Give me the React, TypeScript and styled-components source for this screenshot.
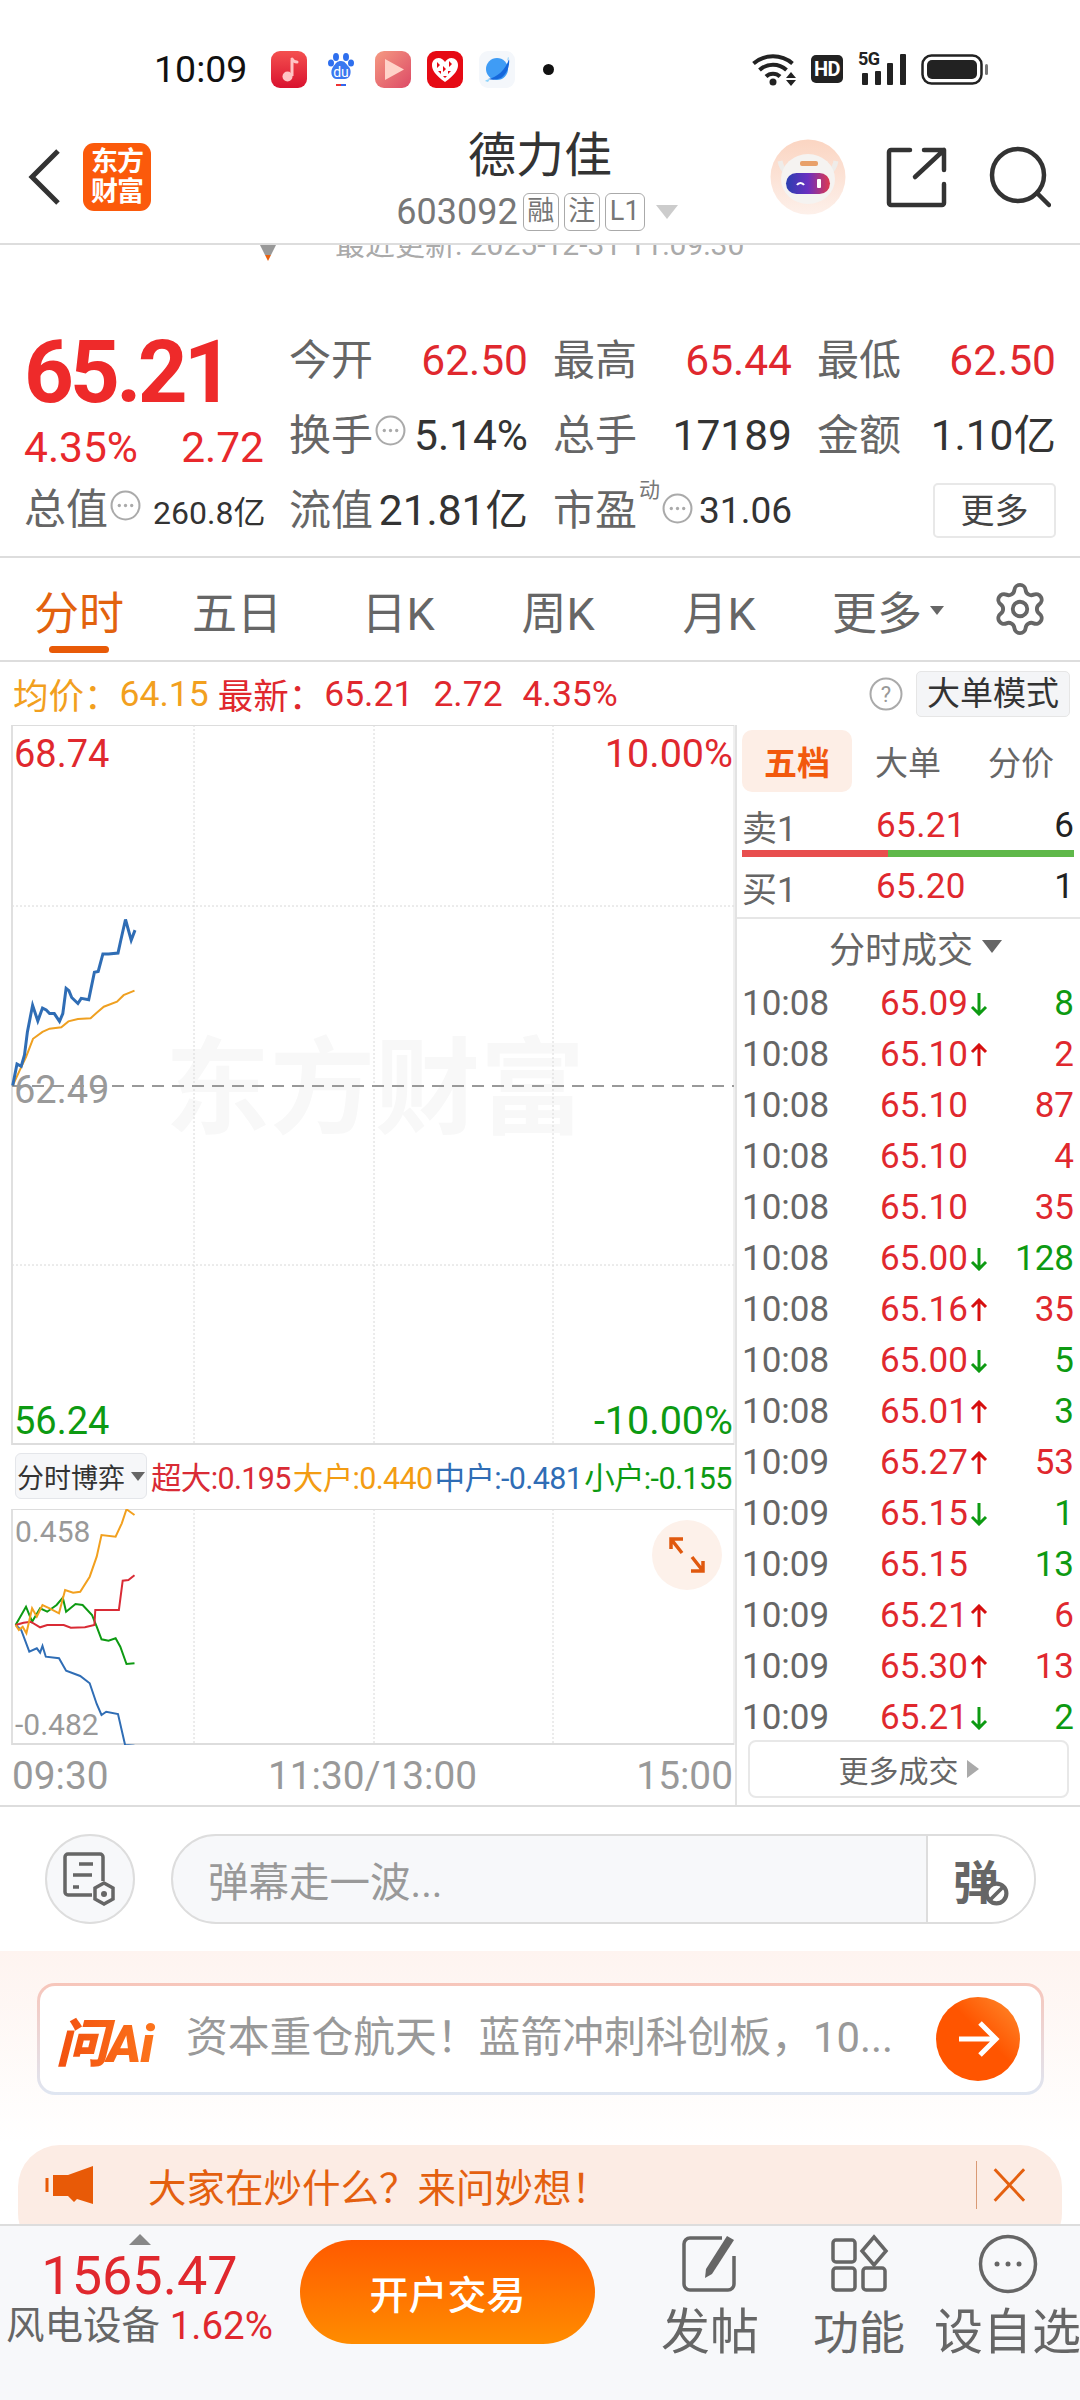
import styled, { createGlobalStyle } from "styled-components";
import { Settings } from "lucide-react";

const Global = createGlobalStyle`
  html, body {
    margin: 0;
    padding: 0;
    background: #fff;
  }
  * {
    box-sizing: border-box;
  }
  body {
    font-family: Roboto, "Noto Sans CJK SC", sans-serif;
    color: #666;
  }
`;

const RED = "#e0282e";
const GREEN = "#0d9a12";

const Page = styled.div`
  width: 1080px;
  height: 2400px;
  overflow: hidden;
  display: flex;
  flex-direction: column;
  background: #fff;
`;

/* status bar */
const StatusBar = styled.div`
  height: 110px;
  padding: 46px 92px 0 154px;
  display: flex;
  align-items: flex-start;
`;

const Clock = styled.div`
  font-size: 37.5px;
  line-height: 46px;
  color: #111;
  width: 117px;
`;

const AppIcons = styled.div`
  display: flex;
  align-items: center;
  gap: 16px;
  height: 46px;
`;

const AppIcon = styled.svg`
  width: 36px;
  height: 37px;
  display: block;
`;

const Dot = styled.span`
  width: 11px;
  height: 11px;
  margin-left: 12px;
  border-radius: 50%;
  background: #111;
`;

const SysIcons = styled.div`
  margin-left: auto;
  display: flex;
  align-items: center;
  gap: 15px;
  height: 46px;
`;

const HdBadge = styled.span`
  width: 32px;
  height: 28px;
  border-radius: 5px;
  background: #222;
  color: #fff;
  font-size: 20px;
  font-weight: 700;
  line-height: 28px;
  text-align: center;
  letter-spacing: -0.5px;
`;

const SignalWrap = styled.div`
  position: relative;
  width: 48px;
  height: 32px;
`;

const FiveG = styled.span`
  position: absolute;
  left: 0;
  top: -3px;
  font-size: 18px;
  line-height: 18px;
  font-weight: 700;
  color: #222;
  letter-spacing: -0.5px;
`;

/* header */
const Header = styled.header`
  height: 135px;
  display: flex;
  align-items: center;
  border-bottom: 2px solid #ddd;
  position: relative;
  padding: 0 29px 0 27px;
`;

const LogoTile = styled.div`
  margin-left: 22px;
  width: 68px;
  height: 68px;
  border-radius: 11px;
  background: #fb5a0b;
  color: #fff;
  font-size: 27px;
  font-weight: 700;
  line-height: 30px;
  text-align: center;
  padding-top: 4px;
  letter-spacing: -1px;
`;

const TitleBlock = styled.div`
  position: absolute;
  left: 0;
  right: 0;
  top: 0;
  display: flex;
  flex-direction: column;
  align-items: center;
  pointer-events: none;
`;

const StockName = styled.div`
  font-size: 48px;
  line-height: 68px;
  margin-top: 12px;
  color: #333;
`;

const CodeRow = styled.div`
  display: flex;
  align-items: center;
  gap: 5px;
  margin-top: 2px;
  margin-left: -6px;
  height: 40px;
`;

const CodeText = styled.span`
  font-size: 36px;
  color: #777;
  margin-right: 0;
`;

const MiniBadge = styled.span<{ $w?: number }>`
  width: ${(p) => p.$w ?? 36}px;
  height: 38px;
  border: 1.5px solid #aaa;
  border-radius: 6px;
  font-size: 27px;
  line-height: 34px;
  text-align: center;
  color: #777;
`;

const DownTri = styled.span<{ $size?: number; $color?: string; $ml?: number }>`
  width: 0;
  height: 0;
  margin-left: ${(p) => p.$ml ?? 0}px;
  border-left: ${(p) => p.$size ?? 11}px solid transparent;
  border-right: ${(p) => p.$size ?? 11}px solid transparent;
  border-top: ${(p) => (p.$size ?? 11) * 1.3}px solid ${(p) => p.$color ?? "#ccc"};
`;

const HeaderRight = styled.div`
  margin-left: auto;
  display: flex;
  align-items: center;
`;

const Robot = styled.svg`
  width: 76px;
  height: 76px;
  margin-right: 40px;
`;

const HeadIcon = styled.svg<{ $gap?: number }>`
  width: 62px;
  height: 62px;
  margin-right: ${(p) => p.$gap ?? 0}px;
  display: block;
`;

/* clipped update line */
const UpdateStrip = styled.div`
  height: 18px;
  overflow: hidden;
  display: flex;
  align-items: flex-end;
  padding-left: 260px;
`;

const UpdateTri = styled.span`
  width: 16px;
  height: 16px;
  clip-path: polygon(0 0, 100% 0, 50% 100%);
  background: linear-gradient(#999 65%, #e8600f 65%);
  margin-bottom: 2px;
  margin-right: 59px;
`;

const UpdateText = styled.span`
  font-size: 30px;
  line-height: 36px;
  color: #aaa;
  white-space: nowrap;
`;

/* quote */
const Quote = styled.section`
  height: 295px;
  padding: 60px 24px 0 0;
  display: flex;
  border-bottom: 2px solid #ddd;
`;

const QuoteLeft = styled.div`
  width: 288px;
  flex: none;
  padding: 7px 0 0 24px;
`;

const BigPrice = styled.div`
  font-size: 87px;
  line-height: 84px;
  font-weight: 700;
  color: #ee2a2a;
  letter-spacing: -3.8px;
`;

const ChangeRow = styled.div`
  height: 66px;
  width: 240px;
  display: flex;
  align-items: center;
  justify-content: space-between;
  font-size: 42.5px;
  color: #e8282c;
`;

const TotalRow = styled.div`
  height: 60px;
  display: flex;
  align-items: center;
`;

const Label = styled.span`
  font-size: 42px;
  line-height: 50px;
  color: #666;
  white-space: nowrap;
`;

const Hint = styled.svg<{ $mt: number }>`
  width: 31px;
  height: 31px;
  margin-left: 2px;
  flex: none;
  align-self: flex-start;
  margin-top: ${(p) => p.$mt}px;
`;

const SmallValue = styled.span`
  font-size: 32px;
  color: #333;
  margin-left: 12px;
  white-space: nowrap;
`;

const QuoteGrid = styled.div`
  flex: 1;
  display: grid;
  grid-template-columns: repeat(3, 239px);
  grid-auto-rows: 75px;
  column-gap: 25px;
  justify-content: end;
`;

const Cell = styled.div`
  display: flex;
  align-items: center;
  justify-content: space-between;
  position: relative;
`;

const HintGroup = styled.div`
  display: flex;
  align-items: center;
`;

const Value = styled.span<{ $red?: boolean; $size?: number }>`
  font-size: ${(p) => p.$size ?? 42.5}px;
  line-height: 50px;
  height: 50px;
  color: ${(p) => (p.$red ? RED : "#333")};
  white-space: nowrap;
`;

const Superscript = styled.sup`
  font-size: 21px;
  line-height: 1;
  color: #777;
  align-self: flex-start;
  margin-top: -6px;
  margin-left: 2px;
`;

const MoreBtn = styled.button`
  margin-left: auto;
  width: 123px;
  height: 55px;
  background: #fff;
  border: 2px solid #e8e8e8;
  border-radius: 5px;
  font: inherit;
  font-size: 34px;
  line-height: 1;
  color: #444;
  padding: 0;
`;

/* tabs */
const Tabs = styled.nav`
  height: 104px;
  display: grid;
  grid-template-columns: 158px 158px 164px 156px 166px 172px 1fr;
  border-bottom: 2px solid #ddd;
`;

const Tab = styled.div<{ $active?: boolean }>`
  position: relative;
  display: flex;
  align-items: center;
  justify-content: center;
  font-size: 45px;
  padding-top: 3px;
  color: ${(p) => (p.$active ? "#e2620e" : "#666")};
  gap: 8px;
  &::after {
    content: "";
    display: ${(p) => (p.$active ? "block" : "none")};
    position: absolute;
    bottom: 7px;
    left: 50%;
    width: 60px;
    height: 7px;
    margin-left: -30px;
    border-radius: 4px;
    background: #e85a07;
  }
`;

const GearCell = styled.div`
  display: flex;
  align-items: center;
  justify-content: flex-start;
  color: #666;
  padding-left: 17px;
`;

/* info bar */
const InfoBar = styled.div`
  height: 63px;
  display: flex;
  align-items: center;
  padding: 0 10px 0 13px;
  font-size: 35.5px;
  white-space: pre;
`;

const InfoText = styled.span<{ $color: string; $gap?: number }>`
  color: ${(p) => p.$color};
  margin-right: ${(p) => p.$gap ?? 0}px;
`;

const HelpIcon = styled.svg`
  width: 34px;
  height: 34px;
  margin-left: auto;
  margin-right: 13px;
`;

const ModeBtn = styled.div`
  width: 154px;
  height: 46px;
  background: #f4f5f7;
  border: 1px solid #e6e6e6;
  border-radius: 5px;
  font-size: 33px;
  line-height: 44px;
  text-align: center;
  color: #333;
`;

/* main chart + side panel */
const Main = styled.div`
  height: 1082px;
  display: flex;
  border-bottom: 2px solid #ddd;
`;

const ChartCol = styled.div`
  width: 735px;
  flex: none;
  display: flex;
  flex-direction: column;
`;

const PriceChart = styled.div`
  position: relative;
  height: 720px;
`;

const ChartSvg = styled.svg`
  display: block;
  position: absolute;
  left: 0;
  top: 0;
`;

const Watermark = styled.div`
  position: absolute;
  left: 165px;
  top: 305px;
  font-size: 105px;
  line-height: 120px;
  font-weight: 700;
  letter-spacing: 0;
  color: #f8f8f8;
  white-space: nowrap;
`;

const AxisLabel = styled.span<{ $color: string; $side: "left" | "right"; $top: number }>`
  position: absolute;
  ${(p) => p.$side}: ${(p) => (p.$side === "left" ? 14 : 2)}px;
  top: ${(p) => p.$top}px;
  font-size: ${(p) => (p.$side === "left" ? 38 : 39.5)}px;
  line-height: 44px;
  color: ${(p) => p.$color};
`;

const LegendRow = styled.div`
  height: 64px;
  display: flex;
  align-items: center;
  gap: 2px;
  padding: 0 0 2px 15px;
`;

const Picker = styled.div`
  width: 132px;
  height: 46px;
  flex: none;
  border: 1px solid #e4e6ea;
  border-radius: 6px;
  background: #f6f7f9;
  display: flex;
  align-items: center;
  justify-content: center;
  gap: 6px;
  font-size: 27px;
  color: #333;
  margin-right: 2px;
`;

const LegendText = styled.span<{ $color: string }>`
  font-size: 30.5px;
  letter-spacing: -0.65px;
  color: ${(p) => p.$color};
  white-space: nowrap;
`;

const FlowChart = styled.div`
  position: relative;
  height: 236px;
`;

const FlowLabel = styled.span<{ $top: number }>`
  position: absolute;
  left: 15px;
  top: ${(p) => p.$top}px;
  font-size: 30px;
  line-height: 36px;
  color: #999;
`;

const ExpandBtn = styled.div`
  position: absolute;
  right: 13px;
  top: 11px;
  width: 70px;
  height: 70px;
  border-radius: 50%;
  background: #fdf1ea;
  display: flex;
  align-items: center;
  justify-content: center;
`;

const TimeAxis = styled.div`
  flex: 1;
  display: flex;
  align-items: center;
  justify-content: space-between;
  padding: 0 2px 0 12px;
  font-size: 38.8px;
  color: #999;
`;

const SidePanel = styled.aside`
  flex: 1;
  border-left: 2px solid #e3e3e3;
  display: flex;
  flex-direction: column;
  padding-top: 5px;
`;

const SideTabs = styled.div`
  height: 62px;
  margin-left: 5px;
  display: grid;
  grid-template-columns: 110px 112px 114px;
`;

const SideTab = styled.div<{ $active?: boolean }>`
  display: flex;
  align-items: center;
  justify-content: center;
  font-size: 33px;
  border-radius: 10px;
  font-weight: ${(p) => (p.$active ? 700 : 400)};
  color: ${(p) => (p.$active ? "#f2590d" : "#666")};
  background: ${(p) => (p.$active ? "#fdeee6" : "transparent")};
`;

const BookRow = styled.div<{ $top?: number }>`
  height: 58px;
  display: flex;
  align-items: center;
  padding: ${(p) => p.$top ?? 0}px 6px 0 5px;
  font-size: 35px;
`;

const BookLabel = styled.span`
  width: 134px;
  color: #666;
`;

const BookPrice = styled.span`
  color: ${RED};
  letter-spacing: 0.4px;
`;

const BookQty = styled.span`
  margin-left: auto;
  color: #222;
`;

const BookBar = styled.div`
  height: 7px;
  margin: 0 6px 0 5px;
  display: flex;
  flex: none;
`;

const BookBarPart = styled.div<{ $color: string; $flex: number }>`
  flex: ${(p) => p.$flex};
  background: ${(p) => p.$color};
`;

const TradeHead = styled.div`
  height: 61px;
  margin-top: 2px;
  border-top: 2px solid #e6e6e6;
  display: flex;
  align-items: center;
  justify-content: center;
  gap: 9px;
  font-size: 36px;
  color: #666;
  padding: 0 0 4px 14px;
`;

const TradeList = styled.div`
  height: 768px;
  overflow: hidden;
`;

const TradeRow = styled.div`
  height: 51px;
  display: flex;
  align-items: center;
  padding: 0 6px 0 5px;
  font-size: 35px;
`;

const TradeTime = styled.span`
  width: 138px;
  flex: none;
  color: #666;
`;

const TradePrice = styled.span`
  width: 90px;
  flex: none;
  color: ${RED};
`;

const TradeArrow = styled.svg`
  width: 18px;
  height: 24px;
  flex: none;
`;

const TradeQty = styled.span<{ $up: boolean }>`
  margin-left: auto;
  color: ${(p) => (p.$up ? RED : GREEN)};
`;

const TradeMore = styled.div`
  margin: -6px 11px 0 11px;
  height: 58px;
  border: 2px solid #e8e8e8;
  border-radius: 8px;
  display: flex;
  align-items: center;
  justify-content: center;
  gap: 8px;
  font-size: 30px;
  color: #666;
  background: #fff;
  position: relative;
`;

const RightTri = styled.span`
  width: 0;
  height: 0;
  border-top: 9px solid transparent;
  border-bottom: 9px solid transparent;
  border-left: 12px solid #aaa;
`;

/* danmu */
const DanmuRow = styled.div`
  height: 144px;
  display: flex;
  align-items: center;
  padding: 0 44px 0 45px;
  gap: 36px;
`;

const DanmuRound = styled.div`
  width: 90px;
  height: 90px;
  border-radius: 50%;
  border: 2px solid #ddd;
  background: #f7f8fa;
  display: flex;
  align-items: center;
  justify-content: center;
  flex: none;
`;

const DanmuInput = styled.div`
  flex: 1;
  height: 90px;
  border: 2px solid #ddd;
  border-radius: 45px;
  background: #f7f8fa;
  display: flex;
  align-items: center;
  overflow: hidden;
`;

const DanmuHolder = styled.div`
  flex: 1;
  padding-left: 35px;
  font-size: 40.5px;
  color: #999;
`;

const DanmuSend = styled.div`
  width: 108px;
  height: 100%;
  background: #fff;
  border-left: 2px solid #ddd;
  display: flex;
  align-items: center;
  padding-left: 25px;
  position: relative;
  font-size: 46px;
  font-weight: 700;
  color: #666;
`;

const NoBadge = styled.svg`
  position: absolute;
  left: 56px;
  top: 45px;
  width: 25px;
  height: 25px;
`;

/* ai area */
const AiArea = styled.section`
  height: 273px;
  padding: 32px 18px 0;
  background: linear-gradient(#fef4f0, #fff 70%);
  overflow: hidden;
`;

const AiBox = styled.div`
  height: 112px;
  margin: 0 18px 0 19px;
  border-radius: 18px;
  padding: 3px;
  background: linear-gradient(#f7c6bb, #dfe6f2);
`;

const AiInner = styled.div`
  height: 100%;
  border-radius: 15px;
  background: #fff;
  display: flex;
  align-items: center;
  padding: 0 21px 0 16px;
`;

const AiLogo = styled.span`
  font-size: 52px;
  font-weight: 900;
  font-style: italic;
  letter-spacing: -1px;
  background: linear-gradient(90deg, #f2500f, #ff7f20);
  -webkit-background-clip: text;
  background-clip: text;
  color: transparent;
  width: 130px;
  flex: none;
`;

const AiQuestion = styled.span`
  flex: 1;
  font-size: 41.8px;
  line-height: 50px;
  color: #999;
  white-space: nowrap;
  padding-bottom: 3px;
`;

const AiGo = styled.div`
  width: 84px;
  height: 84px;
  border-radius: 50%;
  background: linear-gradient(45deg, #ff5500 55%, #ff8d2f);
  display: flex;
  align-items: center;
  justify-content: center;
  flex: none;
`;

const Banner = styled.div`
  height: 110px;
  margin-top: 50px;
  padding: 0 32px 30px 27px;
  border-radius: 42px;
  background: #fcece4;
  display: flex;
  align-items: center;
`;

const BannerText = styled.span`
  font-size: 38.5px;
  color: #e4600f;
  margin-left: 53px;
  flex: 1;
`;

const BannerClose = styled.svg`
  width: 54px;
  height: 48px;
  border-left: 1px solid #d99a75;
`;

/* bottom bar */
const BottomBar = styled.footer`
  flex: 1;
  background: #f7f8fa;
  border-top: 2px solid #ddd;
  display: flex;
  align-items: flex-start;
`;

const IndexBlock = styled.div`
  width: 279px;
  margin-right: 21px;
  flex: none;
  display: flex;
  flex-direction: column;
  align-items: center;
  padding-top: 8px;
`;

const UpTri = styled.span`
  width: 0;
  height: 0;
  border-left: 11px solid transparent;
  border-right: 11px solid transparent;
  border-bottom: 11px solid #888;
`;

const IndexPrice = styled.div`
  font-size: 54px;
  line-height: 62px;
  color: #e0282e;
`;

const IndexName = styled.div`
  font-size: 38.5px;
  line-height: 46px;
  color: #666;
  margin-top: -4px;
  white-space: nowrap;
`;

const IndexPct = styled.span`
  color: #e0282e;
`;

const TradeBtn = styled.div`
  width: 295px;
  height: 104px;
  margin-top: 14px;
  border-radius: 52px;
  background: linear-gradient(#ff5a00, #ff8c00);
  color: #fff;
  font-size: 39px;
  font-weight: 500;
  display: flex;
  align-items: center;
  justify-content: center;
  flex: none;
`;

const Actions = styled.div`
  flex: 1;
  display: grid;
  grid-template-columns: 148px 150px 1fr;
  padding: 8px 0 0 41px;
`;

const Action = styled.div<{ $size: number }>`
  display: flex;
  flex-direction: column;
  align-items: center;
  font-size: ${(p) => p.$size}px;
  line-height: 58px;
  color: #666;
  white-space: nowrap;
`;

const ActionIcon = styled.svg`
  width: 60px;
  height: 60px;
  margin-bottom: 10px;
`;

type Pt = [number, number];

const pts = (list: Pt[], fy: number, oy: number) =>
  list.map(([x, y]) => `${(x / 2.119).toFixed(1)},${(y / fy + oy).toFixed(1)}`).join(" ");

const priceLine: Pt[] = [[27,797],[36,750],[45,755],[52,730],[58,680],[69,622],[80,656],[90,628],[98,632],[105,640],[115,640],[126,657],[133,640],[140,585],[146,590],[152,605],[165,618],[172,607],[188,610],[200,550],[208,548],[218,510],[230,510],[250,508],[256,480],[266,435],[278,480],[286,458]];
const avgLine: Pt[] = [[27,797],[45,757],[55,735],[70,695],[90,680],[105,673],[130,670],[145,657],[165,652],[192,650],[205,638],[220,625],[248,614],[262,600],[285,590]];

const flowOrange: Pt[] = [[33,585],[40,600],[48,590],[56,610],[68,535],[78,560],[90,525],[105,535],[125,550],[138,480],[155,488],[170,485],[190,440],[205,380],[215,315],[245,320],[258,280],[268,238],[285,255]];
const flowRed: Pt[] = [[33,585],[50,578],[65,575],[85,592],[100,585],[135,585],[150,593],[180,592],[200,585],[202,540],[252,540],[260,452],[272,450],[285,436]];
const flowGreen: Pt[] = [[33,585],[55,530],[68,575],[85,535],[100,545],[120,525],[133,503],[140,545],[160,522],[175,525],[195,555],[205,590],[215,628],[230,632],[245,625],[255,650],[268,702],[285,700]];
const flowBlue: Pt[] = [[33,585],[45,600],[62,665],[78,655],[85,668],[90,648],[97,680],[125,685],[140,722],[170,738],[190,760],[205,822],[215,855],[225,845],[250,852],[265,945],[285,947]];

const trades: [string, string, "up" | "down" | "", string, boolean][] = [
  ["10:08", "65.09", "down", "8", false],
  ["10:08", "65.10", "up", "2", true],
  ["10:08", "65.10", "", "87", true],
  ["10:08", "65.10", "", "4", true],
  ["10:08", "65.10", "", "35", true],
  ["10:08", "65.00", "down", "128", false],
  ["10:08", "65.16", "up", "35", true],
  ["10:08", "65.00", "down", "5", false],
  ["10:08", "65.01", "up", "3", false],
  ["10:09", "65.27", "up", "53", true],
  ["10:09", "65.15", "down", "1", false],
  ["10:09", "65.15", "", "13", false],
  ["10:09", "65.21", "up", "6", true],
  ["10:09", "65.30", "up", "13", true],
  ["10:09", "65.21", "down", "2", false],
];

function DotsHint({ top = 4 }: { top?: number }) {
  return (
    <Hint $mt={top} viewBox="0 0 30 30">
      <circle cx="15" cy="15" r="13.5" fill="none" stroke="#aaa" strokeWidth="2" />
      <circle cx="9" cy="15" r="1.6" fill="#aaa" />
      <circle cx="15" cy="15" r="1.6" fill="#aaa" />
      <circle cx="21" cy="15" r="1.6" fill="#aaa" />
    </Hint>
  );
}

function Arrow({ dir }: { dir: "up" | "down" }) {
  const up = dir === "up";
  return (
    <TradeArrow viewBox="0 0 18 24">
      <g fill="none" stroke={up ? "#d60f0f" : GREEN} strokeWidth="3">
        {up ? (
          <path d="M9 23V3M2 9l7-7 7 7" />
        ) : (
          <path d="M9 1v20M2 15l7 7 7-7" />
        )}
      </g>
    </TradeArrow>
  );
}

function Grid({ w, h, rows }: { w: number; h: number; rows: number[] }) {
  return (
    <g>
      {[194, 374, 553].map((x) => (
        <line key={x} x1={x} x2={x} y1={0} y2={h} stroke="#d8d8d8" strokeWidth="1" strokeDasharray="2 2" />
      ))}
      {rows.map((y) => (
        <line key={y} x1={12} x2={w} y1={y} y2={y} stroke="#d8d8d8" strokeWidth="1" strokeDasharray="2 2" />
      ))}
      <line x1={12} x2={12} y1={0} y2={h} stroke="#e0e0e0" strokeWidth="2" />
      <line x1={734} x2={734} y1={0} y2={h} stroke="#e0e0e0" strokeWidth="1" />
      <line x1={12} x2={734} y1={0.5} y2={0.5} stroke="#ddd" strokeWidth="1" />
      <line x1={12} x2={734} y1={h - 1} y2={h - 1} stroke="#ddd" strokeWidth="2" />
    </g>
  );
}

export default function App() {
  return (
    <Page>
      <Global />
      <StatusBar>
        <Clock>10:09</Clock>
        <AppIcons>
          <AppIcon viewBox="0 0 36 37">
            <defs>
              <linearGradient id="mus" x1="0" y1="0" x2="0" y2="1">
                <stop offset="0" stopColor="#f4504f" />
                <stop offset="1" stopColor="#d9122f" />
              </linearGradient>
            </defs>
            <rect width="36" height="37" rx="9" fill="url(#mus)" />
            <path d="M21 9v16" fill="none" stroke="#ffc4c4" strokeWidth="3" />
            <circle cx="16.500" cy="25.500" r="5" fill="#ffc4c4" />
            <path d="M21 8c1 2 3 3 5 3" fill="none" stroke="#ffc4c4" strokeWidth="3" strokeLinecap="round" />
          </AppIcon>
          <AppIcon viewBox="0 0 36 37">
            <ellipse cx="13" cy="6" rx="3" ry="4" fill="#2e6fee" />
            <ellipse cx="23" cy="6" rx="3" ry="4" fill="#2e6fee" />
            <ellipse cx="8" cy="12" rx="3" ry="3.500" fill="#2e6fee" />
            <ellipse cx="28" cy="12" rx="3" ry="3.500" fill="#2e6fee" />
            <path d="M18 10c4 0 5 3 8 6s2 12-4 12h-8c-6 0-7-8-4-12s4-6 8-6z" fill="#3a78f0" />
            <text x="18" y="26" fontSize="14" fill="#fff" textAnchor="middle" fontFamily="Roboto">du</text>
            <rect x="13" y="33" width="5" height="2" fill="#e33" />
            <rect x="18" y="33" width="5" height="2" fill="#36e" />
          </AppIcon>
          <AppIcon viewBox="0 0 36 37">
            <defs>
              <linearGradient id="vid" x1="0" y1="0" x2="1" y2="1">
                <stop offset="0" stopColor="#f59a82" />
                <stop offset="1" stopColor="#dd4a66" />
              </linearGradient>
            </defs>
            <rect width="36" height="37" rx="9" fill="url(#vid)" />
            <path d="M10 8l19 10.500-19 10.500z" fill="#ffd2c8" />
          </AppIcon>
          <AppIcon viewBox="0 0 36 37">
            <rect width="36" height="37" rx="9" fill="#e60a14" />
            <path d="M18 31C8 24 5 19 5 14c0-4 3-7 6.500-7 3 0 5 2 6.500 4 1.500-2 3.500-4 6.500-4 3.500 0 6.500 3 6.500 7 0 5-3 10-13 17z" fill="#fff" />
            <path d="M10 11l3 3-3 3zM22 10l3 3-3 3zM16 15l3 3-3 3zM11 20l3 0 0 3zM21 20l3 0-3 3zM16 25l4 0-2 2z" fill="#e60a14" />
          </AppIcon>
          <AppIcon viewBox="0 0 36 37">
            <rect width="36" height="37" rx="9" fill="#f4f7fb" />
            <circle cx="18" cy="18" r="11" fill="#3f9cf5" />
            <path d="M9 28c9-1 18-10 21-20 1 7-2 15-8 19-5 2-9 2-13 1z" fill="#1567dc" />
            <path d="M6 30c1-1 3-2 5-2l-2 3zM30 7l-2 3 1-4z" fill="#8fd4fb" />
          </AppIcon>
          <Dot />
        </AppIcons>
        <SysIcons>
          <svg width="44" height="34" viewBox="0 0 44 34">
            <g fill="none" stroke="#222" strokeWidth="4">
              <path d="M1.500 11.500a30 30 0 0 1 39 0" />
              <path d="M7.500 18a20 20 0 0 1 27 0" />
              <path d="M14 24.500a10 10 0 0 1 14 0" />
            </g>
            <circle cx="21" cy="30" r="3.500" fill="#222" />
            <path d="M39 20l5 6h-10zM34 28h10l-5 6z" fill="#222" />
          </svg>
          <HdBadge>HD</HdBadge>
          <SignalWrap>
            <FiveG>5G</FiveG>
            <svg width="48" height="32" viewBox="0 0 48 32">
              <rect x="4" y="20" width="6" height="12" rx="1" fill="#222" />
              <rect x="17" y="18" width="6" height="14" rx="1" fill="#222" />
              <rect x="29" y="10" width="6" height="22" rx="1" fill="#222" />
              <rect x="42" y="1" width="6" height="31" rx="1" fill="#222" />
            </svg>
          </SignalWrap>
          <svg width="67" height="31" viewBox="0 0 67 31">
            <rect x="1.500" y="1.500" width="59" height="28" rx="9" fill="none" stroke="#222" strokeWidth="2.500" />
            <rect x="6" y="6" width="50" height="19" rx="5" fill="#222" />
            <rect x="64" y="10" width="3" height="11" rx="1.500" fill="#777" />
          </svg>
        </SysIcons>
      </StatusBar>

      <Header>
        <svg width="34" height="58" viewBox="0 0 34 58">
          <path d="M31 3L5 29l26 26" fill="none" stroke="#333" strokeWidth="5" />
        </svg>
        <LogoTile>
          东方
          <br />
          财富
        </LogoTile>
        <TitleBlock>
          <StockName>德力佳</StockName>
          <CodeRow>
            <CodeText>603092</CodeText>
            <MiniBadge>融</MiniBadge>
            <MiniBadge>注</MiniBadge>
            <MiniBadge $w={40}>L1</MiniBadge>
            <DownTri $ml={6} />
          </CodeRow>
        </TitleBlock>
        <HeaderRight>
          <Robot viewBox="0 0 76 76">
            <defs>
              <linearGradient id="peach" x1="0" y1="0" x2="0" y2="1">
                <stop offset="0" stopColor="#fbd5c2" />
                <stop offset="1" stopColor="#fdf0ea" />
              </linearGradient>
              <linearGradient id="visor" x1="0" y1="0" x2="1" y2="0">
                <stop offset="0" stopColor="#2a3fb0" />
                <stop offset="0.5" stopColor="#6a2fc0" />
                <stop offset="1" stopColor="#e03a4e" />
              </linearGradient>
            </defs>
            <circle cx="38" cy="38" r="37.500" fill="url(#peach)" />
            <path d="M10 22c1 5 3 9 7 12M66 22c-1 5-3 9-7 12" fill="none" stroke="#efece9" strokeWidth="5" />
            <ellipse cx="38" cy="40" rx="27" ry="25" fill="#f5f3f1" />
            <rect x="30" y="22" width="18" height="5" rx="2" fill="#e8a06a" />
            <rect x="16" y="34" width="44" height="21" rx="10.500" fill="url(#visor)" />
            <path d="M27 46a4 4 0 0 1 7 0" fill="none" stroke="#fff" strokeWidth="2" />
            <rect x="47" y="40" width="4" height="9" rx="1" fill="#fff" />
          </Robot>
          <HeadIcon $gap={41} viewBox="0 0 62 62">
            <g fill="none" stroke="#333" strokeWidth="4.500" strokeLinecap="round" strokeLinejoin="round">
              <path d="M24 4H5a2 2 0 0 0-2 2v51a2 2 0 0 0 2 2h51a2 2 0 0 0 2-2V38" />
              <path d="M29 31L58 4M38 4h20v20" />
            </g>
          </HeadIcon>
          <HeadIcon viewBox="0 0 62 62">
            <g fill="none" stroke="#333" strokeWidth="4.500" strokeLinecap="round">
              <circle cx="29" cy="29" r="26" />
              <path d="M48 47l12 12" />
            </g>
          </HeadIcon>
        </HeaderRight>
      </Header>

      <UpdateStrip>
        <UpdateTri />
        <UpdateText>最近更新: 2025-12-31 11:09:30</UpdateText>
      </UpdateStrip>

      <Quote>
        <QuoteLeft>
          <BigPrice>65.21</BigPrice>
          <ChangeRow>
            <span>4.35%</span>
            <span>2.72</span>
          </ChangeRow>
          <TotalRow>
            <Label>总值</Label>
            <DotsHint top={10} />
            <SmallValue>260.8亿</SmallValue>
          </TotalRow>
        </QuoteLeft>
        <QuoteGrid>
          <Cell>
            <Label>今开</Label>
            <Value $red>62.50</Value>
          </Cell>
          <Cell>
            <Label>最高</Label>
            <Value $red>65.44</Value>
          </Cell>
          <Cell>
            <Label>最低</Label>
            <Value $red>62.50</Value>
          </Cell>
          <Cell>
            <HintGroup>
              <Label>换手</Label>
              <DotsHint />
            </HintGroup>
            <Value>5.14%</Value>
          </Cell>
          <Cell>
            <Label>总手</Label>
            <Value>17189</Value>
          </Cell>
          <Cell>
            <Label>金额</Label>
            <Value>1.10亿</Value>
          </Cell>
          <Cell>
            <Label>流值</Label>
            <Value>21.81亿</Value>
          </Cell>
          <Cell>
            <HintGroup>
              <Label>市盈</Label>
              <Superscript>动</Superscript>
              <DotsHint top={7} />
            </HintGroup>
            <Value $size={37}>31.06</Value>
          </Cell>
          <Cell>
            <MoreBtn>更多</MoreBtn>
          </Cell>
        </QuoteGrid>
      </Quote>

      <Tabs>
        <Tab $active>分时</Tab>
        <Tab>五日</Tab>
        <Tab>日K</Tab>
        <Tab>周K</Tab>
        <Tab>月K</Tab>
        <Tab>
          更多
          <DownTri $size={7} $color="#666" />
        </Tab>
        <GearCell>
          <Settings size={58} strokeWidth={1.6} />
        </GearCell>
      </Tabs>

      <InfoBar>
        <InfoText $color="#f2a01e">均价：</InfoText>
        <InfoText $color="#f2a01e" $gap={9}>64.15</InfoText>
        <InfoText $color={RED}>最新：</InfoText>
        <InfoText $color={RED} $gap={20}>65.21</InfoText>
        <InfoText $color={RED} $gap={20}>2.72</InfoText>
        <InfoText $color={RED}>4.35%</InfoText>
        <HelpIcon viewBox="0 0 34 34">
          <circle cx="17" cy="17" r="15.500" fill="none" stroke="#aaa" strokeWidth="2" />
          <text x="17" y="25" fontSize="22" fill="#999" textAnchor="middle" fontFamily="Roboto">?</text>
        </HelpIcon>
        <ModeBtn>大单模式</ModeBtn>
      </InfoBar>

      <Main>
        <ChartCol>
          <PriceChart>
            <Watermark>东方财富</Watermark>
            <ChartSvg width="735" height="720" viewBox="0 0 735 720">
              <Grid w={734} h={720} rows={[181, 540]} />
              <line x1={12} x2={734} y1={361} y2={361} stroke="#999" strokeWidth="2" strokeDasharray="12 8" />
              <polyline points={pts(avgLine, 2.18, -5)} fill="none" stroke="#efa021" strokeWidth="2" />
              <polyline points={pts(priceLine, 2.18, -5)} fill="none" stroke="#2f6db5" strokeWidth="3" />
            </ChartSvg>
            <AxisLabel $side="left" $top={7} $color={RED}>68.74</AxisLabel>
            <AxisLabel $side="right" $top={7} $color={RED}>10.00%</AxisLabel>
            <AxisLabel $side="left" $top={343} $color="#999">62.49</AxisLabel>
            <AxisLabel $side="left" $top={674} $color={GREEN}>56.24</AxisLabel>
            <AxisLabel $side="right" $top={674} $color={GREEN}>-10.00%</AxisLabel>
          </PriceChart>
          <LegendRow>
            <Picker>
              分时博弈
              <DownTri $size={7} $color="#666" />
            </Picker>
            <LegendText $color="#d92b35">超大:0.195</LegendText>
            <LegendText $color="#f39c12">大户:0.440</LegendText>
            <LegendText $color="#2f6db5">中户:-0.481</LegendText>
            <LegendText $color={GREEN}>小户:-0.155</LegendText>
          </LegendRow>
          <FlowChart>
            <ChartSvg width="735" height="236" viewBox="0 0 735 236">
              <Grid w={734} h={236} rows={[]} />
              <polyline points={pts(flowBlue, 3, -79)} fill="none" stroke="#2f6db5" strokeWidth="2" />
              <polyline points={pts(flowGreen, 3, -79)} fill="none" stroke={GREEN} strokeWidth="2" />
              <polyline points={pts(flowRed, 3, -79)} fill="none" stroke="#d92b35" strokeWidth="2" />
              <polyline points={pts(flowOrange, 3, -79)} fill="none" stroke="#f2a01e" strokeWidth="2" />
            </ChartSvg>
            <FlowLabel $top={5}>0.458</FlowLabel>
            <FlowLabel $top={198}>-0.482</FlowLabel>
            <ExpandBtn>
              <svg width="36" height="36" viewBox="0 0 36 36">
                <g fill="none" stroke="#e0590f" strokeWidth="3.500">
                  <path d="M2 12V2h12M2 2l11 14" />
                  <path d="M34 24v10H22M34 34L23 20" />
                </g>
              </svg>
            </ExpandBtn>
          </FlowChart>
          <TimeAxis>
            <span>09:30</span>
            <span>11:30/13:00</span>
            <span>15:00</span>
          </TimeAxis>
        </ChartCol>

        <SidePanel>
          <SideTabs>
            <SideTab $active>五档</SideTab>
            <SideTab>大单</SideTab>
            <SideTab>分价</SideTab>
          </SideTabs>
          <BookRow $top={8}>
            <BookLabel>卖1</BookLabel>
            <BookPrice>65.21</BookPrice>
            <BookQty>6</BookQty>
          </BookRow>
          <BookBar>
            <BookBarPart $color="#e84e4e" $flex={146} />
            <BookBarPart $color="#5fb84a" $flex={186} />
          </BookBar>
          <BookRow>
            <BookLabel>买1</BookLabel>
            <BookPrice>65.20</BookPrice>
            <BookQty>1</BookQty>
          </BookRow>
          <TradeHead>
            分时成交
            <DownTri $size={10} $color="#666" />
          </TradeHead>
          <TradeList>
            {trades.map(([time, price, dir, qty, up], i) => (
              <TradeRow key={i}>
                <TradeTime>{time}</TradeTime>
                <TradePrice>{price}</TradePrice>
                {dir && <Arrow dir={dir} />}
                <TradeQty $up={up}>{qty}</TradeQty>
              </TradeRow>
            ))}
          </TradeList>
          <TradeMore>
            更多成交
            <RightTri />
          </TradeMore>
        </SidePanel>
      </Main>

      <DanmuRow>
        <DanmuRound>
          <svg width="56" height="56" viewBox="0 0 56 56">
            <g fill="none" stroke="#666" strokeWidth="3.500">
              <path d="M30 44H6a3 3 0 0 1-3-3V6a3 3 0 0 1 3-3h32a3 3 0 0 1 3 3v24" />
              <path d="M17 13h14M11 24h19M11 36h6" />
              <path d="M42 32l9 5v11l-9 5-9-5V37z" />
            </g>
            <circle cx="42" cy="43" r="3" fill="#666" />
          </svg>
        </DanmuRound>
        <DanmuInput>
          <DanmuHolder>弹幕走一波...</DanmuHolder>
          <DanmuSend>
            弹
            <NoBadge viewBox="0 0 24 24">
              <circle cx="12" cy="12" r="9.500" fill="#fff" stroke="#666" strokeWidth="4" />
              <path d="M6 18L18 6" stroke="#666" strokeWidth="3.500" />
            </NoBadge>
          </DanmuSend>
        </DanmuInput>
      </DanmuRow>

      <AiArea>
        <AiBox>
          <AiInner>
            <AiLogo>问Ai</AiLogo>
            <AiQuestion>资本重仓航天！蓝箭冲刺科创板，10...</AiQuestion>
            <AiGo>
              <svg width="44" height="44" viewBox="0 0 44 44">
                <path d="M3 22h36M24 6l16 16-16 16" fill="none" stroke="#fff" strokeWidth="5" />
              </svg>
            </AiGo>
          </AiInner>
        </AiBox>
        <Banner>
          <svg width="50" height="40" viewBox="0 0 50 40">
            <path d="M48 1v38l-16-5-3 3-6-6H8V10h15z" fill="#e85a07" />
            <path d="M2 13v14" stroke="#e85a07" strokeWidth="3" />
          </svg>
          <BannerText>大家在炒什么？来问妙想！</BannerText>
          <BannerClose viewBox="0 0 54 48">
            <path d="M18 8l30 32M48 8L18 40" fill="none" stroke="#e4600f" strokeWidth="3" />
          </BannerClose>
        </Banner>
      </AiArea>

      <BottomBar>
        <IndexBlock>
          <UpTri />
          <IndexPrice>1565.47</IndexPrice>
          <IndexName>
            风电设备 <IndexPct>1.62%</IndexPct>
          </IndexName>
        </IndexBlock>
        <TradeBtn>开户交易</TradeBtn>
        <Actions>
          <Action $size={49}>
            <ActionIcon viewBox="0 0 60 60">
              <g fill="none" stroke="#666" strokeWidth="3.500">
                <path d="M42 4H10a6 6 0 0 0-6 6v40a6 6 0 0 0 6 6h38a6 6 0 0 0 6-6V22" />
              </g>
              <path d="M47 2l7 4-22 34-7 4 1-9z" fill="#666" />
            </ActionIcon>
            发帖
          </Action>
          <Action $size={46}>
            <ActionIcon viewBox="0 0 60 60">
              <g fill="none" stroke="#666" strokeWidth="3.500">
                <rect x="4" y="6" width="22" height="22" rx="3" />
                <rect x="4" y="34" width="22" height="22" rx="3" />
                <rect x="34" y="34" width="22" height="22" rx="3" />
                <path d="M45 3l12 14-12 14-12-14z" />
              </g>
            </ActionIcon>
            功能
          </Action>
          <Action $size={49}>
            <ActionIcon viewBox="0 0 60 60">
              <circle cx="30" cy="30" r="27.500" fill="none" stroke="#666" strokeWidth="3.500" />
              <circle cx="19" cy="30" r="2.500" fill="#666" />
              <circle cx="30" cy="30" r="2.500" fill="#666" />
              <circle cx="41" cy="30" r="2.500" fill="#666" />
            </ActionIcon>
            设自选
          </Action>
        </Actions>
      </BottomBar>
    </Page>
  );
}
